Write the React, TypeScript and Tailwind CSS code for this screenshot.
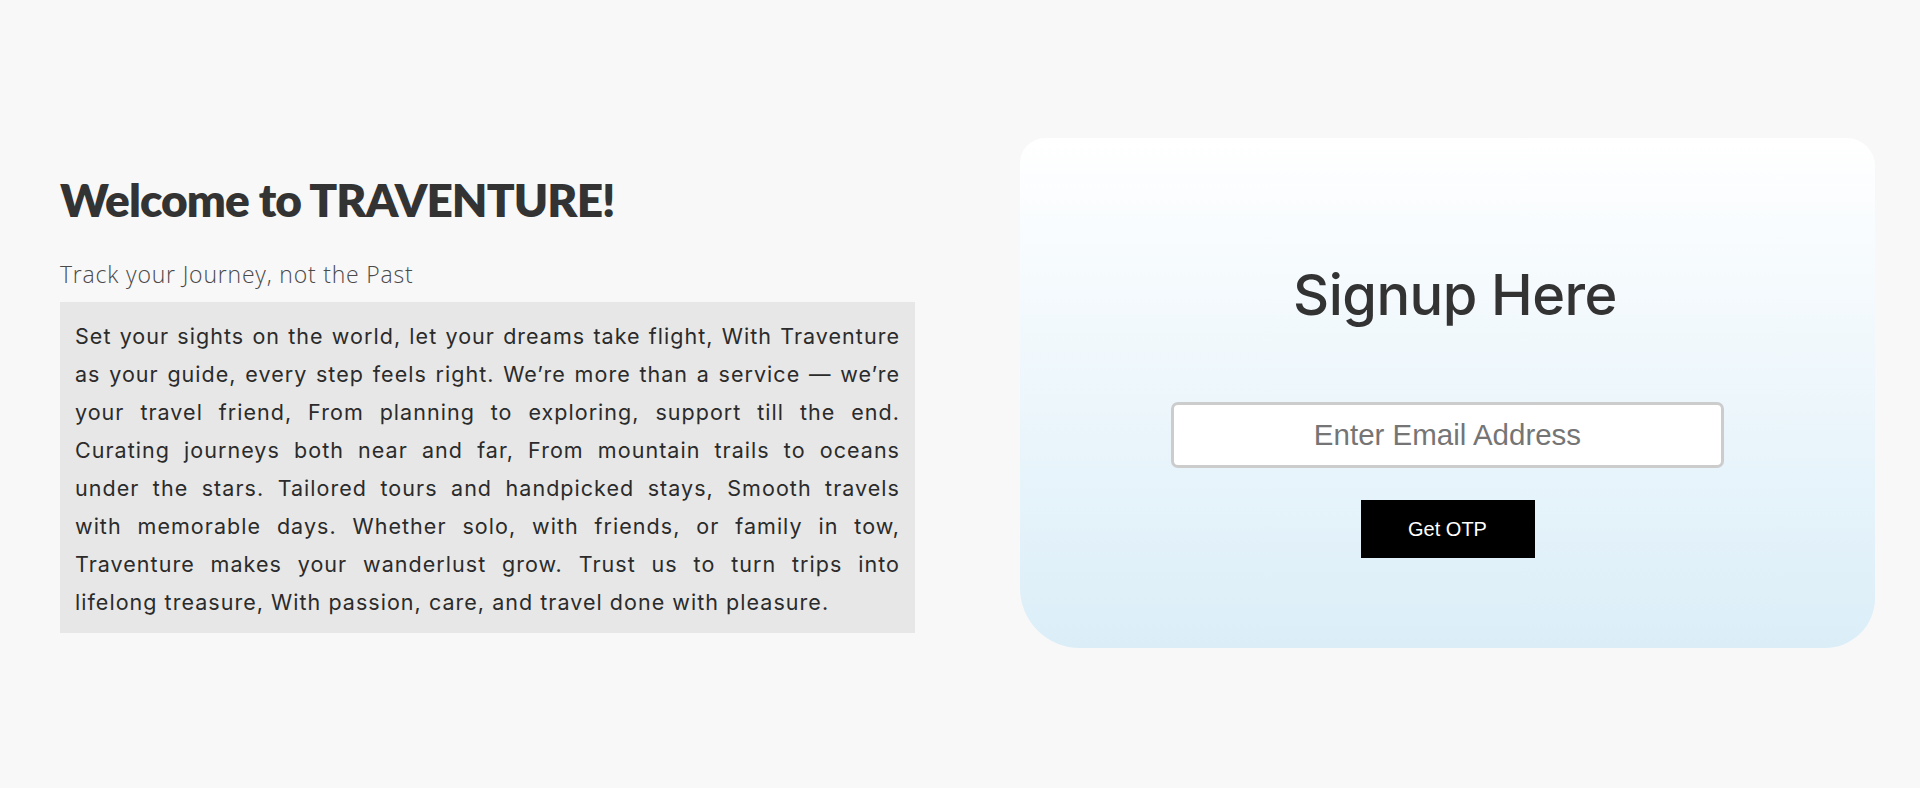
import React from "react";

const lines = [
  "Set your sights on the world, let your dreams take flight, With Traventure",
  "as your guide, every step feels right. We\u2019re more than a service \u2014 we\u2019re",
  "your travel friend, From planning to exploring, support till the end.",
  "Curating journeys both near and far, From mountain trails to oceans",
  "under the stars. Tailored tours and handpicked stays, Smooth travels",
  "with memorable days. Whether solo, with friends, or family in tow,",
  "Traventure makes your wanderlust grow. Trust us to turn trips into",
  "lifelong treasure, With passion, care, and travel done with pleasure.",
];

export default function App() {
  return (
    <div className="w-full h-[788px] bg-[#f8f8f8] flex items-start">
      <div className="w-[855px] ml-[60px] mt-[172px] flex flex-col">
        <h1 className="font-['Lato',sans-serif] font-extrabold text-[46px] leading-[56px] tracking-[-0.02em] text-[#333333]">
          Welcome to TRAVENTURE!
        </h1>
        <p className="mt-[32px] font-['Open_Sans',sans-serif] font-light text-[23px] leading-[28px] tracking-[0.035em] text-[#4a4a4a]">
          Track your Journey, not the Past
        </p>
        <div className="mt-[14px] bg-[#e7e7e7] px-[15px] pt-[15px] pb-[12px] font-['Inter',sans-serif] text-[21.5px] leading-[38px] tracking-[0.048em] text-[#2b2b2b]">
          {lines.map((l, i) => (
            <div
              key={i}
              className={
                i < lines.length - 1
                  ? "text-justify [text-align-last:justify] whitespace-nowrap"
                  : "text-left whitespace-nowrap"
              }
            >
              {l}
            </div>
          ))}
        </div>
      </div>
      <div className="ml-[105px] mt-[138px] w-[855px] h-[510px] rounded-tl-[25px] rounded-tr-[28px] rounded-br-[50px] rounded-bl-[60px] bg-gradient-to-b from-[#ffffff] to-[#dbeef8] flex flex-col items-center pt-[123px]">
        <h2 className="pl-[15px] font-['Inter',sans-serif] font-medium text-[56px] leading-[68px] text-[#333333] tracking-[-0.01em]">
          Signup Here
        </h2>
        <input
          type="email"
          placeholder="Enter Email Address"
          className="mt-[73px] w-[553px] h-[66px] border-[3px] border-[#cccccc] rounded-[7px] bg-white text-center font-['Liberation_Sans',Arial,sans-serif] text-[29.5px] placeholder:text-[#757575] outline-none"
        />
        <button className="mt-[32px] w-[174px] h-[58px] bg-black text-white font-['Liberation_Sans',Arial,sans-serif] text-[20px]">
          Get OTP
        </button>
      </div>
    </div>
  );
}
